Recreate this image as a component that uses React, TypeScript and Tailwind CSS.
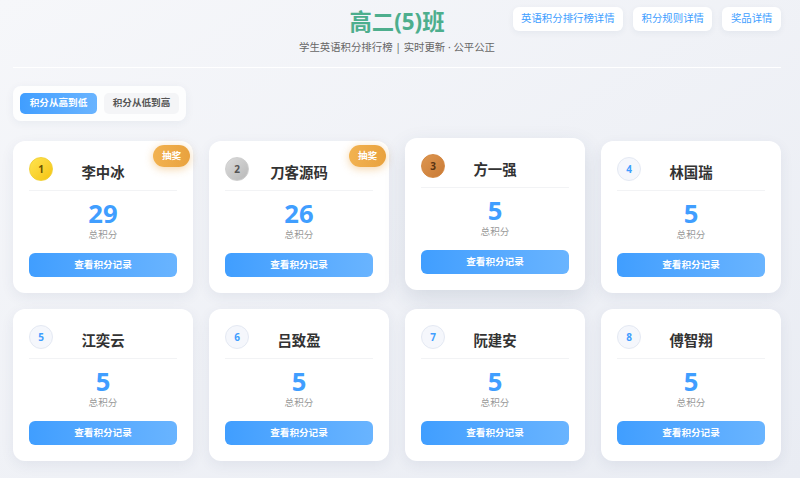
const students = [
  { rank: 1, name: '李中冰', score: 29, lottery: true },
  { rank: 2, name: '刀客源码', score: 26, lottery: true },
  { rank: 3, name: '方一强', score: 5, lottery: false },
  { rank: 4, name: '林国瑞', score: 5, lottery: false },
  { rank: 5, name: '江奕云', score: 5, lottery: false },
  { rank: 6, name: '吕致盈', score: 5, lottery: false },
  { rank: 7, name: '阮建安', score: 5, lottery: false },
  { rank: 8, name: '傅智翔', score: 5, lottery: false },
];

const fontStack = { fontFamily: '"Noto Sans", "Noto Sans CJK SC", sans-serif' };

function RankBadge({ rank }: { rank: number }) {
  const cls =
    rank === 1
      ? 'bg-linear-to-br from-[#ffe44d] to-[#f5c400] text-[#6b5200] border-[#f2d23a]'
      : rank === 2
      ? 'bg-linear-to-br from-[#dcdcdc] to-[#b8b8b8] text-[#555] border-[#cfcfcf]'
      : rank === 3
      ? 'bg-linear-to-br from-[#dd9650] to-[#c97a35] text-[#5a3413] border-[#d58a45]'
      : 'bg-[#f5f7fc] text-[#409eff] border-[#e4e9f3]';
  return (
    <div
      className={`absolute left-0 top-0 w-6 h-6 rounded-full border flex items-center justify-center text-[10px] font-bold ${cls}`}
    >
      {rank}
    </div>
  );
}

function StudentCard({ s, raised }: { s: (typeof students)[number]; raised: boolean }) {
  return (
    <div
      className={`relative bg-white rounded-[12px] p-4 ${
        raised
          ? '-translate-y-[3px] shadow-[0_8px_22px_rgba(40,60,100,0.13)]'
          : 'shadow-[0_4px_14px_rgba(40,60,100,0.07)]'
      }`}
    >
      {s.lottery && (
        <div className="absolute top-[4px] right-[3px] w-[37px] h-[22px] rounded-full bg-linear-to-r from-[#f2b250] to-[#e9a23e] text-white text-[9.6px] font-bold flex items-center justify-center shadow-[0_2px_8px_rgba(233,162,62,0.45)]">
          抽奖
        </div>
      )}
      {/* header */}
      <div className="relative flex justify-center pt-[8px] pb-[10px] border-b border-[#f2f3f5]">
        <RankBadge rank={s.rank} />
        <span className="text-[14.4px] leading-[15px] font-bold text-[#333]">{s.name}</span>
      </div>
      {/* score */}
      <div className="pt-[10px] flex flex-col items-center">
        <div className="h-[26px] flex items-center text-[25.6px] leading-none font-bold text-[#409eff]">
          {s.score}
        </div>
        <div className="mt-[2px] text-[9.6px] leading-[12px] text-[#999]">总积分</div>
      </div>
      <button className="mt-[12px] w-full h-[24px] rounded-[6px] bg-linear-to-r from-[#409eff] to-[#69b4ff] text-white text-[9.6px] font-bold">
        查看积分记录
      </button>
    </div>
  );
}

export default function App() {
  return (
    <div
      className="min-h-screen bg-linear-to-br from-[#f6f7fa] to-[#e9ecf3]"
      style={fontStack}
    >
      <div className="ml-[13px] w-[768px] pb-4">
        {/* Header */}
        <div className="relative pt-[8px] pb-[13px] border-b border-white text-center">
          <h1 className="text-[22.4px] leading-[28px] font-bold text-[#4dae8d]">高二(5)班</h1>
          <p className="mt-[4px] text-[10.4px] leading-[14px] text-[#666]">
            学生英语积分排行榜 | 实时更新 · 公平公正
          </p>
          <div className="absolute right-0 top-[7px] flex gap-[10px]">
            {['英语积分排行榜详情', '积分规则详情', '奖品详情'].map((t) => (
              <button
                key={t}
                className="h-[24px] px-[8.5px] rounded-[6px] bg-white text-[10.4px] text-[#409eff] shadow-[0_2px_6px_rgba(40,60,100,0.06)]"
              >
                {t}
              </button>
            ))}
          </div>
        </div>

        {/* Sort toggle */}
        <div className="mt-[18px] inline-flex gap-[7px] p-[7px] bg-white/85 rounded-[8px] shadow-[0_2px_10px_rgba(40,60,100,0.06)]">
          <button className="w-[77px] h-[21px] rounded-[5px] bg-linear-to-r from-[#409eff] to-[#69b4ff] text-white text-[9.6px] font-bold">
            积分从高到低
          </button>
          <button className="w-[75px] h-[21px] rounded-[5px] bg-[#f4f5f7] text-[#555] text-[9.6px] font-bold">
            积分从低到高
          </button>
        </div>

        {/* Cards */}
        <div className="mt-[20px] grid grid-cols-4 gap-4">
          {students.map((s) => (
            <StudentCard key={s.rank} s={s} raised={s.rank === 3} />
          ))}
        </div>
      </div>
    </div>
  );
}
